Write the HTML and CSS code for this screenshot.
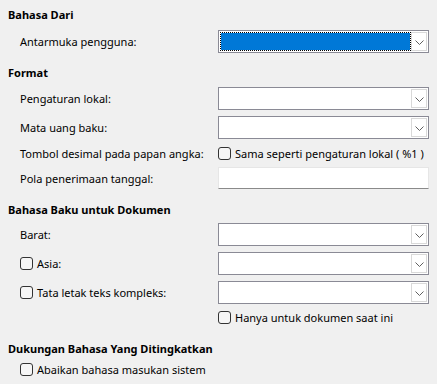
FILE: index.html
```html
<!DOCTYPE html>
<html>
<head>
<meta charset="utf-8">
<link rel="stylesheet" href="styles.css">
</head>
<body>
<div class="page">
  <div class="heading h1">Bahasa Dari</div>
  <div class="row r-first">
    <span class="label">Antarmuka pengguna:</span>
    <div class="combo focus"><div class="value"></div><div class="btn"><svg width="9" height="5" viewBox="0 0 9 5"><path d="M0.5 0.5 L4.5 4.5 L8.5 0.5" fill="none" stroke="#606060" stroke-width="1"/></svg></div></div>
  </div>

  <div class="heading h2">Format</div>
  <div class="row r-a">
    <span class="label">Pengaturan lokal:</span>
    <div class="combo"><div class="value"></div><div class="btn"><svg width="9" height="5" viewBox="0 0 9 5"><path d="M0.5 0.5 L4.5 4.5 L8.5 0.5" fill="none" stroke="#606060" stroke-width="1"/></svg></div></div>
  </div>
  <div class="row r-b">
    <span class="label">Mata uang baku:</span>
    <div class="combo"><div class="value"></div><div class="btn"><svg width="9" height="5" viewBox="0 0 9 5"><path d="M0.5 0.5 L4.5 4.5 L8.5 0.5" fill="none" stroke="#606060" stroke-width="1"/></svg></div></div>
  </div>
  <div class="row r-check">
    <span class="label">Tombol desimal pada papan angka:</span>
    <label class="check"><span class="box"></span>Sama seperti pengaturan lokal ( %1 )</label>
  </div>
  <div class="row r-text">
    <span class="label">Pola penerimaan tanggal:</span>
    <div class="textbox"></div>
  </div>

  <div class="heading h3">Bahasa Baku untuk Dokumen</div>
  <div class="row r-c">
    <span class="label">Barat:</span>
    <div class="combo"><div class="value"></div><div class="btn"><svg width="9" height="5" viewBox="0 0 9 5"><path d="M0.5 0.5 L4.5 4.5 L8.5 0.5" fill="none" stroke="#606060" stroke-width="1"/></svg></div></div>
  </div>
  <div class="row r-b">
    <label class="check label"><span class="box"></span>Asia:</label>
    <div class="combo"><div class="value"></div><div class="btn"><svg width="9" height="5" viewBox="0 0 9 5"><path d="M0.5 0.5 L4.5 4.5 L8.5 0.5" fill="none" stroke="#606060" stroke-width="1"/></svg></div></div>
  </div>
  <div class="row r-b">
    <label class="check label"><span class="box"></span>Tata letak teks kompleks:</label>
    <div class="combo"><div class="value"></div><div class="btn"><svg width="9" height="5" viewBox="0 0 9 5"><path d="M0.5 0.5 L4.5 4.5 L8.5 0.5" fill="none" stroke="#606060" stroke-width="1"/></svg></div></div>
  </div>
  <div class="row r-check2">
    <span class="label"></span>
    <label class="check"><span class="box"></span>Hanya untuk dokumen saat ini</label>
  </div>

  <div class="heading h4">Dukungan Bahasa Yang Ditingkatkan</div>
  <div class="row r-last">
    <label class="check label"><span class="box"></span>Abaikan bahasa masukan sistem</label>
  </div>
</div>
</body>
</html>
```

FILE: styles.css
```css
html, body {
  margin: 0;
  padding: 0;
  background: #f0f0f0;
}
.page {
  width: 437px;
  height: 384px;
  padding: 7px 0 0 8px;
  box-sizing: border-box;
  font-family: "Noto Sans", "DejaVu Sans", sans-serif;
  font-size: 11px;
  color: #000;
  overflow: hidden;
}
.heading {
  font-weight: bold;
  height: 16px;
  line-height: 16px;
}
.h2 { margin-top: 12px; }
.h3 { margin-top: 13px; }
.h4 { margin-top: 13px; }
.row {
  display: flex;
  align-items: center;
  padding-left: 12px;
}
.label {
  width: 198px;
  flex: none;
  white-space: nowrap;
}
.r-first { margin-top: 7px; height: 23px; }
.r-a { margin-top: 6px; height: 23px; }
.r-b { margin-top: 6px; height: 23px; }
.r-c { margin-top: 5px; height: 23px; }
.r-check { margin-top: 3px; height: 22px; }
.r-text { margin-top: 3px; height: 22px; }
.r-check2 { margin-top: 2px; height: 22px; }
.r-last { margin-top: 1px; height: 22px; }

.combo {
  width: 211px;
  height: 23px;
  box-sizing: border-box;
  border: 1px solid #8a8a95;
  background: #fff;
  display: flex;
  padding: 1px;
}
.combo .value {
  flex: 1;
}
.combo.focus .value {
  background: #0078d7;
  border: 1px dotted #000;
  background-clip: padding-box;
}
.combo .btn {
  width: 16px;
  box-sizing: border-box;
  border: 1px solid #d9d9d9;
  background: #fff;
  display: flex;
  align-items: center;
  justify-content: center;
}
.combo .btn svg { display: block; margin-top: 1px; }

.textbox {
  width: 211px;
  height: 22px;
  box-sizing: border-box;
  background: #fff;
  border: 1px solid #e6e6e6;
  border-bottom-color: #8a8a8a;
}

.check {
  display: flex;
  align-items: center;
  white-space: nowrap;
}
.box {
  width: 13px;
  height: 13px;
  box-sizing: border-box;
  border: 1px solid #333;
  border-radius: 3px;
  background: #f6f6f6;
  margin-right: 4px;
  flex: none;
}
```
